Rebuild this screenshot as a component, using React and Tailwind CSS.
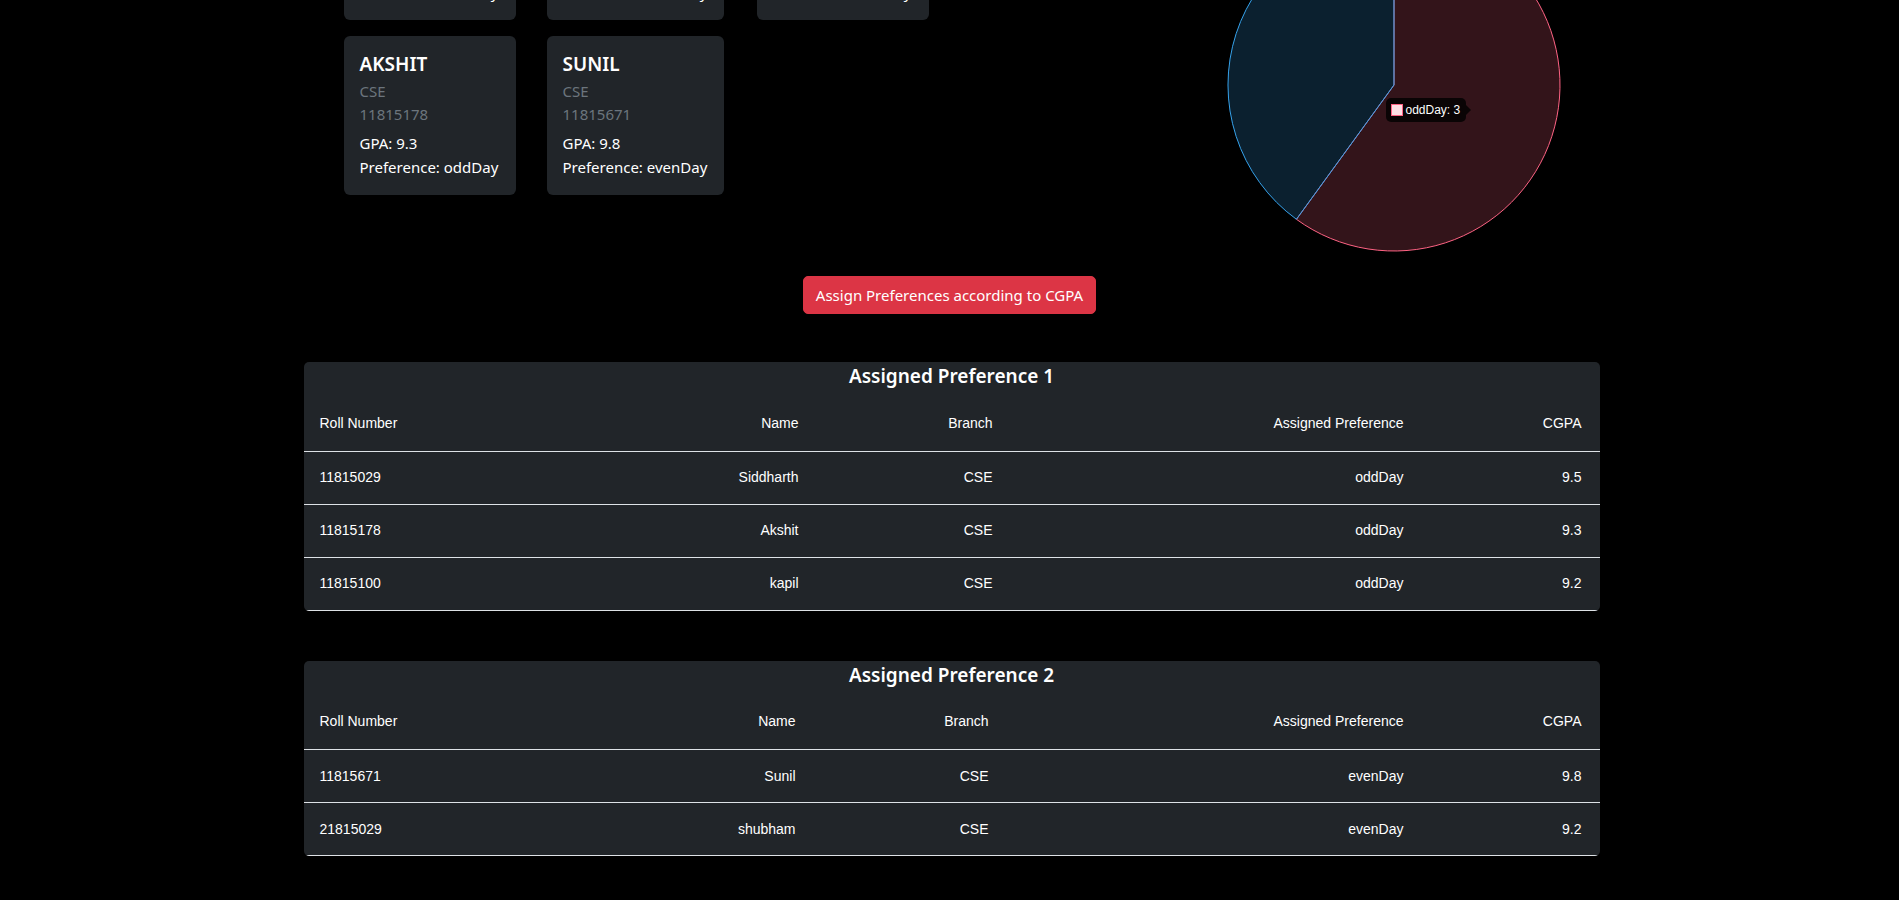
import React from 'react';

const students = [
  [
    { name: 'SIDDHARTH', branch: 'CSE', roll: '11815029', gpa: '9.5', pref: 'oddDay', w: 'w-[172px]' },
    { name: 'SHUBHAM', branch: 'CSE', roll: '21815029', gpa: '9.2', pref: 'evenDay', w: 'w-[177px]' },
    { name: 'KAPIL', branch: 'CSE', roll: '11815100', gpa: '9.2', pref: 'oddDay', w: 'w-[172px]' },
  ],
  [
    { name: 'AKSHIT', branch: 'CSE', roll: '11815178', gpa: '9.3', pref: 'oddDay', w: 'w-[172px]' },
    { name: 'SUNIL', branch: 'CSE', roll: '11815671', gpa: '9.8', pref: 'evenDay', w: 'w-[177px]' },
  ],
];

const pref1 = [
  ['11815029', 'Siddharth', 'CSE', 'oddDay', '9.5'],
  ['11815178', 'Akshit', 'CSE', 'oddDay', '9.3'],
  ['11815100', 'kapil', 'CSE', 'oddDay', '9.2'],
];

const pref2 = [
  ['11815671', 'Sunil', 'CSE', 'evenDay', '9.8'],
  ['21815029', 'shubham', 'CSE', 'evenDay', '9.2'],
];

const ui = "font-['Noto_Sans',sans-serif]";
const arial = "font-['Liberation_Sans',Arial,sans-serif]";

function StudentCard({ s }) {
  return (
    <div className={`${s.w} bg-[#212529] rounded-[6px] px-4 pt-4 pb-4 text-white whitespace-nowrap`}>
      <h5 className="text-[19px] leading-6 font-semibold">{s.name}</h5>
      <div className="mt-[5px] text-[15px] leading-5 text-[#6c757d]">{s.branch}</div>
      <div className="mt-[3px] text-[15px] leading-5 text-[#6c757d]">{s.roll}</div>
      <p className="mt-[7px] text-[15px] leading-6">GPA: {s.gpa}</p>
      <p className="text-[15px] leading-6">Preference: {s.pref}</p>
    </div>
  );
}

function PieChart() {
  return (
    <div className="relative w-[334px] h-[334px]">
      <svg width="334" height="334" viewBox="0 0 334 334">
        <path d="M167 167 L167 1 A166 166 0 1 1 69.43 301.3 Z" fill="rgba(255,99,132,0.2)" stroke="rgb(255,99,132)" strokeWidth="1" />
        <path d="M167 167 L69.43 301.3 A166 166 0 0 1 167 1 Z" fill="rgba(54,162,235,0.2)" stroke="rgb(54,162,235)" strokeWidth="1" />
      </svg>
      <div className="absolute left-[159px] top-[180px] flex items-center">
        <div className="h-[24px] flex items-center gap-[3px] pl-[5px] pr-[6px] rounded-[5px] bg-[rgba(0,0,0,0.8)]">
          <span className="w-[12px] h-[12px] bg-[#ffe0e6] border border-[#ff6384]" />
          <span className={`${arial} text-[12px] text-white`}>oddDay: 3</span>
        </div>
        <span className="w-0 h-0 border-y-[5px] border-y-transparent border-l-[5px] border-l-[rgba(0,0,0,0.8)]" />
      </div>
    </div>
  );
}

function PrefTable({ title, rows, widths }) {
  const heads = ['Roll Number', 'Name', 'Branch', 'Assigned Preference', 'CGPA'];
  const pad = (i) => (i === 0 ? 'pl-4 pr-4 text-left' : i === 4 ? 'pl-4 pr-[18px] text-right' : 'px-4 text-right');
  return (
    <div className="bg-[#212529] rounded-[5px] overflow-hidden">
      <div className={`${ui} h-[36px] text-center text-[19px] leading-[28px] font-semibold text-white`}>{title}</div>
      <table className={`${arial} w-full table-fixed border-collapse text-[14px] text-white`}>
        <colgroup>
          {widths.map((w, i) => (
            <col key={i} style={{ width: w }} />
          ))}
        </colgroup>
        <thead>
          <tr className="h-[53px] border-b border-[#dee2e6]">
            {heads.map((h, i) => (
              <th key={h} className={`pb-[2px] font-normal ${pad(i)}`}>{h}</th>
            ))}
          </tr>
        </thead>
        <tbody>
          {rows.map((r) => (
            <tr key={r[0]} className="h-[53px] border-b border-[#dee2e6]">
              {r.map((c, i) => (
                <td key={i} className={pad(i)}>{c}</td>
              ))}
            </tr>
          ))}
        </tbody>
      </table>
    </div>
  );
}

export default function App() {
  return (
    <div className={`min-h-screen bg-black overflow-hidden ${ui}`}>
      <div className="w-[1296px] mx-auto">
        <div className="flex items-start -mt-[139px]">
          <div className="ml-[42px] w-[620px] grid grid-cols-[203px_210px_206px] gap-y-4">
            {students.flat().map((s) => (
              <StudentCard key={s.roll} s={s} />
            ))}
          </div>
          <div className="ml-[263px] mt-[57px]">
            <PieChart />
          </div>
        </div>

        <div className="flex justify-center mt-[24px]">
          <button className="bg-[#dc3545] border border-[#dc3545] text-white text-[15px] leading-6 px-3 py-[6px] rounded-[5px]">
            Assign Preferences according to CGPA
          </button>
        </div>

        <div className="mt-[48px] ml-[2px] -mr-[2px]">
          <PrefTable title="Assigned Preference 1" rows={pref1} widths={[300, 211, 194, 411, 180]} />
        </div>
        <div className="mt-[50px] ml-[2px] -mr-[2px] pb-10">
          <PrefTable title="Assigned Preference 2" rows={pref2} widths={[300, 208, 193, 415, 180]} />
        </div>
      </div>
    </div>
  );
}
